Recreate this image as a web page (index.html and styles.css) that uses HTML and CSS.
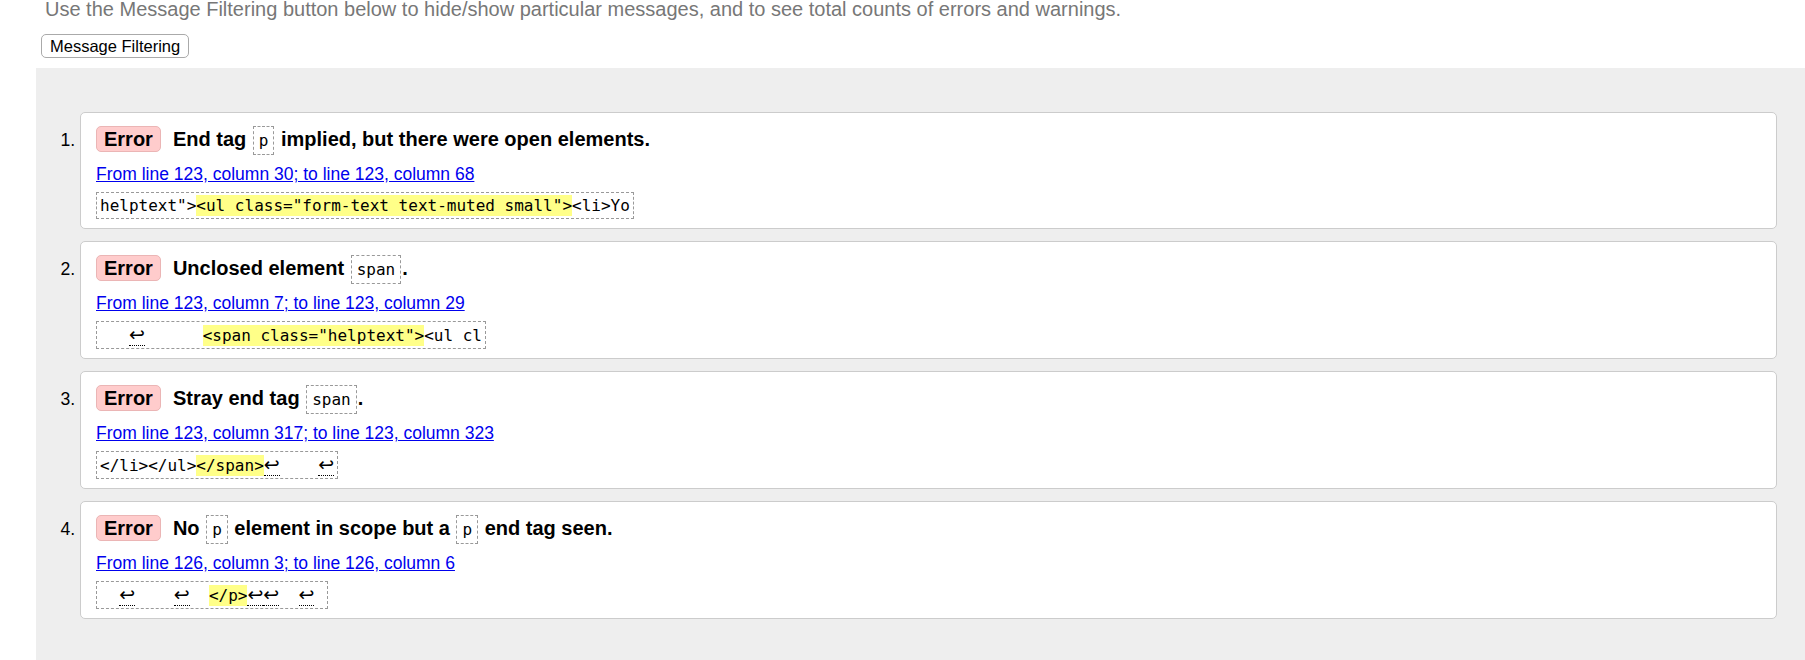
FILE: index.html
```html
<!DOCTYPE html>
<html lang="en">
<head>
<meta charset="utf-8">
<title>Validation results</title>
<link rel="stylesheet" href="styles.css">
</head>
<body>
<p class="intro">Use the Message Filtering button below to hide/show particular messages, and to see total counts of errors and warnings.</p>
<button class="filter-btn" type="button">Message Filtering</button>
<div class="results">
<ol class="msgs">
<li class="msg">
<p class="title"><span class="badge">Error</span>End tag <code class="ref">p</code> implied, but there were open elements.</p>
<p class="loc"><a href="#">From line 123, column 30; to line 123, column 68</a></p>
<p class="extract"><code>helptext"&gt;<mark>&lt;ul class="form-text text-muted small"&gt;</mark>&lt;li&gt;Yo</code></p>
</li>
<li class="msg">
<p class="title"><span class="badge">Error</span>Unclosed element <code class="ref">span</code>.</p>
<p class="loc"><a href="#">From line 123, column 7; to line 123, column 29</a></p>
<p class="extract"><code>   <span class="lf">↩</span>      <mark>&lt;span class="helptext"&gt;</mark>&lt;ul cl</code></p>
</li>
<li class="msg">
<p class="title"><span class="badge">Error</span>Stray end tag <code class="ref">span</code>.</p>
<p class="loc"><a href="#">From line 123, column 317; to line 123, column 323</a></p>
<p class="extract"><code>&lt;/li&gt;&lt;/ul&gt;<mark>&lt;/span&gt;</mark><span class="lf">↩</span>    <span class="lf">↩</span></code></p>
</li>
<li class="msg">
<p class="title"><span class="badge">Error</span>No <code class="ref">p</code> element in scope but a <code class="ref">p</code> end tag seen.</p>
<p class="loc"><a href="#">From line 126, column 3; to line 126, column 6</a></p>
<p class="extract"><code>  <span class="lf">↩</span>    <span class="lf">↩</span>  <mark>&lt;/p&gt;</mark><span class="lf">↩</span><span class="lf">↩</span>  <span class="lf">↩</span> </code></p>
</li>
</ol>
</div>
</body>
</html>
```

FILE: styles.css
```css
html {
  background: #fff;
}

body {
  margin: 0;
  font-family: "Liberation Sans", Arial, sans-serif;
  color: #000;
}

.intro {
  margin: -2px 0 0;
  padding-left: 45px;
  font-size: 20px;
  line-height: 23px;
  color: #777;
}

.filter-btn {
  display: block;
  margin: 13px 0 0 41px;
  padding: 1px 8px;
  font-family: "Liberation Sans", Arial, sans-serif;
  font-size: 16.5px;
  line-height: 20px;
  color: #000;
  background: #fff;
  border: 1px solid #aaa;
  border-radius: 5px;
}

.results {
  margin: 10px 0 0 36px;
  padding: 44px 28px 80px 0;
  background: #eee;
}

.msgs {
  margin: 0;
  padding: 0 0 0 44px;
  list-style: decimal outside;
  font-size: 17.6px;
}

.msg {
  background: #fff;
  border: 1px solid #ccc;
  border-radius: 5px;
  padding: 13px 15px 9px;
  margin-bottom: 12px;
}

.title {
  margin: 0;
  font-size: 20px;
  font-weight: bold;
  line-height: 23px;
}

.badge {
  display: inline-block;
  margin-right: 12px;
  padding: 1px 7px;
  line-height: 22px;
  background: #fcc;
  border: 1px solid #ebb5b5;
  border-radius: 5px;
}

.ref {
  display: inline-block;
  margin: 0 1px;
  padding: 4px 5px;
  font-family: "DejaVu Sans Mono", monospace;
  font-size: 16px;
  font-weight: normal;
  line-height: 19px;
  border: 1px dashed #999;
}

.loc {
  margin: 9px 0 0;
  font-size: 17.5px;
}

.loc a {
  color: #00e;
  text-decoration: underline;
}

.extract {
  margin: 7px 0 0;
}

.extract code {
  display: inline-block;
  padding: 3px;
  font-family: "DejaVu Sans Mono", monospace;
  font-size: 16px;
  line-height: 19px;
  white-space: pre;
  border: 1px dashed #999;
}

.extract mark {
  background: #ff8;
  color: #000;
  padding: 1px 0;
}

.lf {
  font-family: "DejaVu Sans", sans-serif;
  font-size: 19px;
  padding: 0;
  border-bottom: 1px dotted #000;
}
```
